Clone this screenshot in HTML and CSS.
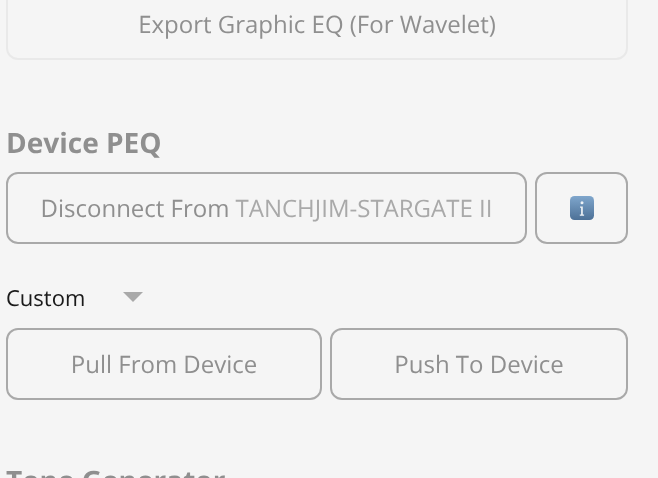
FILE: index.html
```html
<!DOCTYPE html>
<html lang="en">
<head>
<meta charset="utf-8">
<title>Device PEQ</title>
<link rel="stylesheet" href="styles.css">
</head>
<body>
<main class="panel">
  <div class="export-wrap">
    <button class="btn btn-faint export">Export Graphic EQ (For Wavelet)</button>
  </div>
  <section class="peq">
    <h3 class="heading">Device PEQ</h3>
    <div class="row connect-row">
      <button class="btn connect">Disconnect From <span class="device">TANCHJIM-STARGATE II</span></button>
      <button class="btn info" aria-label="Info">
        <svg class="info-icon" viewBox="0 0 24 24" width="24" height="24">
          <defs>
            <linearGradient id="g" x1="0" y1="0" x2="0" y2="1">
              <stop offset="0" stop-color="#7fa6cc"/>
              <stop offset="1" stop-color="#4d7197"/>
            </linearGradient>
          </defs>
          <rect width="24" height="24" rx="4.5" fill="url(#g)"/>
          <circle cx="12" cy="6.8" r="1.5" fill="#eef2f6"/>
          <path d="M10 10.4h2.8v8h1.3v1.3H9.8v-1.3h1.3v-6.7H10z" fill="#eef2f6"/>
        </svg>
      </button>
    </div>
    <div class="select-row">
      <span class="select-label">Custom</span>
      <span class="caret"></span>
    </div>
    <div class="row">
      <button class="btn pull">Pull From Device</button>
      <button class="btn push">Push To Device</button>
    </div>
  </section>
  <h3 class="heading next">Tone Generator</h3>
</main>
</body>
</html>
```
FILE: styles.css
```css
html, body {
  margin: 0;
  height: 100%;
  overflow: hidden;
  background: #f5f5f5;
}
body {
  font-family: "Open Sans", sans-serif;
  text-rendering: geometricPrecision;
}
.panel {
  width: 622px;
  margin-left: 6px;
  will-change: opacity;
}
.export-wrap {
  height: 60px;
  display: flex;
  align-items: flex-end;
}
.btn {
  box-sizing: border-box;
  height: 72px;
  padding: 0;
  border: 2px solid #a9a9a9;
  border-radius: 12px;
  background: transparent;
  color: #8f8f8f;
  font-family: "Open Sans", sans-serif;
  font-size: 24px;
  font-weight: 400;
  white-space: nowrap;
  text-rendering: geometricPrecision;
  display: flex;
  align-items: center;
  justify-content: center;
}
.btn-faint {
  border-color: #e9e9e9;
}
.export {
  width: 100%;
  flex: none;
}
.peq {
  margin-top: 67px;
}
.heading {
  margin: 0;
  color: #8f8f8f;
  font-size: 28px;
  line-height: 32px;
  font-weight: 700;
}
.row {
  display: flex;
  gap: 8px;
}
.connect-row {
  margin-top: 13px;
}
.connect {
  width: 521px;
}
.device {
  color: #a9a9a9;
  margin-left: 6px;
}
.info {
  width: 93px;
}
.info-icon {
  display: block;
}
.select-row {
  display: flex;
  align-items: center;
  height: 30px;
  margin-top: 39px;
  margin-bottom: 15px;
}
.select-label {
  color: #1a1a1a;
  font-size: 22px;
  line-height: 30px;
}
.caret {
  width: 0;
  height: 0;
  margin-left: 38px;
  margin-bottom: 3px;
  border-left: 10px solid transparent;
  border-right: 10px solid transparent;
  border-top: 10px solid #a9a9a9;
}
.pull {
  width: 316px;
}
.push {
  width: 298px;
}
.next {
  margin-top: 65px;
}
```
